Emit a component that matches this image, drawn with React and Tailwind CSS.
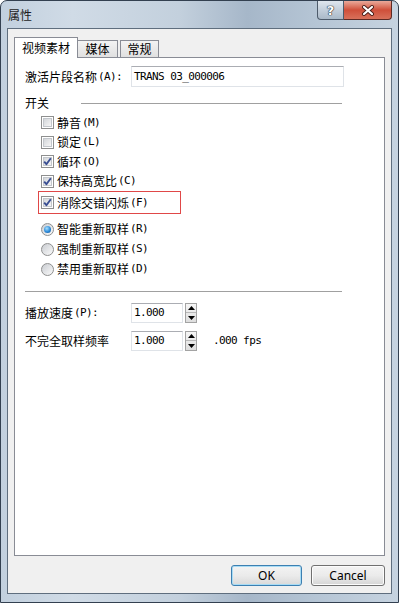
import React from 'react';

const CJK = "font-['Noto_Sans_CJK_SC',sans-serif] text-[12px] leading-[14px] text-black";
const MONO = "font-['DejaVu_Sans_Mono',monospace] text-[11px] leading-[12px] tracking-[-0.6px] text-black";

const Label = ({ cn, en }) => (
    <span className="flex items-center whitespace-nowrap">
        <span className={CJK}>{cn}</span>
        {en && <span className={`${MONO} ml-[1px]`}>{en}</span>}
    </span>
);

const CheckBox = ({ checked }) => (
    <span className="w-[13px] h-[13px] shrink-0 border border-[#8e8f8f] bg-white p-[1px] flex">
        <span className="flex-1 flex items-center justify-center border border-[#c3c7cc] bg-linear-to-br from-[#d3d6da] to-[#f6f6f6]">
            {checked && (
                <svg width="11" height="11" viewBox="0 0 11 11" className="-m-[2px]">
                    <path d="M2.2 5.6 L4.4 8.2 L8.8 2.2" fill="none" stroke="#3a4f93" strokeWidth="1.9" strokeLinejoin="round" />
                </svg>
            )}
        </span>
    </span>
);

const Radio = ({ checked }) => (
    <span className="w-[13px] h-[13px] shrink-0 rounded-full border border-[#8e8f8f] bg-linear-to-br from-[#c9ccd1] to-[#fbfbfb] flex items-center justify-center">
        {checked && (
            <span className="w-[7px] h-[7px] rounded-full bg-[radial-gradient(circle_at_40%_35%,#a6e0ff_0%,#2d8ad8_55%,#0b4e91_100%)]" />
        )}
    </span>
);

const CheckRow = ({ cn, en, checked, h }) => (
    <div className={`flex items-center ml-[16px] ${h}`}>
        <CheckBox checked={checked} />
        <span className="ml-[3px]"><Label cn={cn} en={en} /></span>
    </div>
);

const RadioRow = ({ cn, en, checked }) => (
    <div className="flex items-center ml-[16px] h-[20px]">
        <Radio checked={checked} />
        <span className="ml-[3px]"><Label cn={cn} en={en} /></span>
    </div>
);

const Spinner = () => (
    <div className="ml-[2px] w-[12px] h-[20px] flex flex-col border border-[#a3a3a3] bg-linear-to-b from-[#f6f6f6] to-[#dedede]">
        <div className="h-[9px] flex items-center justify-center border-b border-[#b8b8b8]">
            <svg width="7" height="4" viewBox="0 0 7 4"><path d="M0 4 L3.5 0 L7 4 Z" fill="#000" /></svg>
        </div>
        <div className="flex-1 flex items-center justify-center">
            <svg width="7" height="4" viewBox="0 0 7 4"><path d="M0 0 L3.5 4 L7 0 Z" fill="#000" /></svg>
        </div>
    </div>
);

const NumField = ({ value }) => (
    <div className="w-[52px] h-[20px] bg-white border border-[#dfe3e8] border-t-[#abadb3] flex items-center pl-[2px]">
        <span className={MONO}>{value}</span>
    </div>
);

const Tab = ({ label, active }) =>
    active ? (
        <div className="relative z-10 -mb-[1px] w-[64px] h-[21px] bg-white border border-b-0 border-[#898c95] flex items-center justify-center">
            <span className={CJK}>{label}</span>
        </div>
    ) : (
        <div className="h-[17px] border border-b-0 border-[#898c95] bg-linear-to-b from-[#f3f3f3] to-[#e0e0e0] flex items-center justify-center">
            <span className={CJK}>{label}</span>
        </div>
    );

export default function App() {
    return (
        <div className="w-[399px] h-[603px] flex flex-col rounded-t-[7px] border border-[#334050] bg-[linear-gradient(90deg,#c2d0de_0%,#d0dbe6_18%,#c3d0dd_45%,#a6b7c9_62%,#b4c4d4_78%,#c6d3e0_100%)] overflow-hidden">
            {/* title bar */}
            <div className="h-[27px] shrink-0 flex items-start justify-between pr-[6px]">
                <span className="mt-[7px] ml-[7px] font-['Noto_Sans_CJK_SC',sans-serif] text-[12px] leading-[14px] text-[#1c1c1c]">属性</span>
                <div className="flex">
                    <div className="w-[27px] h-[19px] border border-t-0 border-[#4d5b6b] rounded-bl-[4px] bg-linear-to-b from-[#dfe6ee] via-[#c3cfdb] to-[#aab9c8] flex items-center justify-center">
                        <span className="font-['DejaVu_Sans',sans-serif] font-bold text-[13px] leading-[13px] text-white [text-shadow:0_0_1px_#1d2733,0_0_1px_#1d2733,0_0_1px_#1d2733]">?</span>
                    </div>
                    <div className="w-[48px] h-[19px] border border-t-0 border-l-0 border-[#5e2a24] rounded-br-[4px] bg-linear-to-b from-[#e9a99a] via-[#cf4f3a] to-[#d8705a] flex items-center justify-center">
                        <svg width="14" height="11" viewBox="0 0 14 11">
                            <path d="M3 2 L11 9 M11 2 L3 9" stroke="#4a1f1a" strokeWidth="4" strokeLinecap="round" />
                            <path d="M3 2 L11 9 M11 2 L3 9" stroke="#ffffff" strokeWidth="2.2" strokeLinecap="round" />
                        </svg>
                    </div>
                </div>
            </div>

            {/* client area */}
            <div className="flex-1 flex flex-col mx-[6px] mb-[8px] border border-[#5f6e7e] bg-[#f0f0f0] pt-[8px] px-[6px] pb-[7px]">
                <div className="h-[20px] shrink-0 flex items-end">
                    <Tab label="视频素材" active />
                    <div className="-ml-[1px] w-[41px]"><Tab label="媒体" /></div>
                    <div className="ml-[2px] w-[39px]"><Tab label="常规" /></div>
                </div>

                <div className="flex-1 bg-white border border-[#898c95] pl-[10px] flex flex-col">
                    <div className="mt-[8px] h-[21px] flex items-center">
                        <span className="w-[106px]"><Label cn="激活片段名称" en="(A):" /></span>
                        <div className="w-[213px] h-[21px] bg-white border border-[#dfe3e8] border-t-[#abadb3] flex items-center pl-[2px]">
                            <span className={MONO}>TRANS 03_000006</span>
                        </div>
                    </div>

                    <div className="mt-[8px] h-[16px] flex items-center">
                        <span className={CJK}>开关</span>
                        <div className="ml-[32px] w-[261px] border-t border-[#a0a0a0]" />
                    </div>

                    <div className="mt-[2px] flex flex-col">
                        <CheckRow cn="静音" en="(M)" h="h-[19px]" />
                        <CheckRow cn="锁定" en="(L)" h="h-[20px]" />
                        <CheckRow cn="循环" en="(O)" checked h="h-[19px]" />
                        <CheckRow cn="保持高宽比" en="(C)" checked h="h-[20px]" />
                        <div className="ml-[13px] w-[143px] h-[23px] border border-[#e04848] pl-[2px] flex items-center">
                            <CheckBox checked />
                            <span className="ml-[3px]"><Label cn="消除交错闪烁" en="(F)" /></span>
                        </div>
                    </div>

                    <div className="mt-[5px] flex flex-col">
                        <RadioRow cn="智能重新取样" en="(R)" checked />
                        <RadioRow cn="强制重新取样" en="(S)" />
                        <RadioRow cn="禁用重新取样" en="(D)" />
                    </div>

                    <div className="mt-[12px] w-[317px] border-t border-[#a0a0a0]" />

                    <div className="mt-[11px] h-[20px] flex items-center">
                        <span className="w-[106px]"><Label cn="播放速度" en="(P):" /></span>
                        <NumField value="1.000" />
                        <Spinner />
                    </div>
                    <div className="mt-[8px] h-[20px] flex items-center">
                        <span className="w-[106px]"><Label cn="不完全取样频率" /></span>
                        <NumField value="1.000" />
                        <Spinner />
                        <span className={`${MONO} ml-[16px]`}>.000 fps</span>
                    </div>
                </div>

                <div className="mt-[9px] h-[21px] shrink-0 flex justify-end gap-[9px]">
                    <button className="w-[71px] h-[21px] rounded-[3px] border border-[#3c7fb1] shadow-[inset_0_0_0_1px_#a8dcf5] bg-linear-to-b from-[#f3f3f3] via-[#ebebeb] to-[#d9d9d9] font-['Segoe_UI','Noto_Sans',sans-serif] text-[12px] leading-[14px] text-black">
                        OK
                    </button>
                    <button className="w-[74px] h-[21px] rounded-[3px] border border-[#707070] shadow-[inset_0_0_0_1px_#fcfcfc] bg-linear-to-b from-[#f3f3f3] via-[#ebebeb] to-[#d5d5d5] font-['Segoe_UI','Noto_Sans',sans-serif] text-[12px] leading-[14px] text-black">
                        Cancel
                    </button>
                </div>
            </div>
        </div>
    );
}
